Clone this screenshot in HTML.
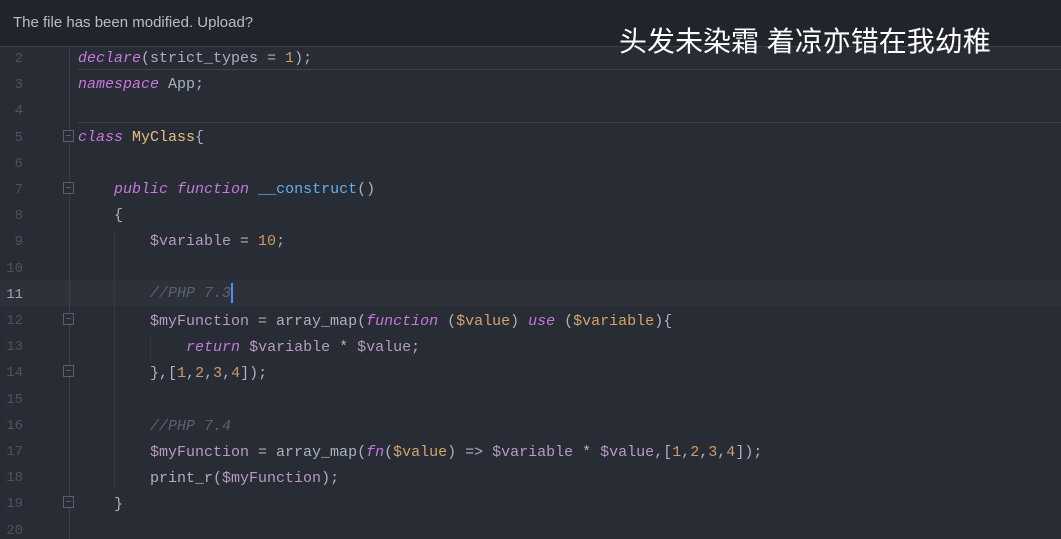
<!DOCTYPE html>
<html><head><meta charset="utf-8"><style>
*{margin:0;padding:0;box-sizing:border-box}
body{width:1061px;height:539px;overflow:hidden;background:#282c34;position:relative;font-family:"Liberation Mono",monospace;font-size:15px}
.top{position:absolute;left:0;top:0;width:1061px;height:47px;background:#21252b;border-bottom:1px solid #3a3f4a;color:#b8bec9;font-family:"Liberation Sans",sans-serif;font-size:15px;padding:14px 0 0 13px}
.cn{position:absolute;left:619px;top:20px;color:#fff;font-family:"Liberation Sans","Noto Sans CJK SC",sans-serif;font-size:28px}
.ln{position:absolute;left:0;width:23px;text-align:right;color:#4b5263;font-size:14px}
.code{position:absolute;left:78px;white-space:pre;color:#abb2bf;height:26px;line-height:26px}
.k{color:#c678dd;font-style:italic}
.c{color:#e5c07b}.n{color:#d19a66}.v{color:#b79bc4}.o{color:#d4a56a}.f{color:#61afef}.cm{color:#5c6370;font-style:italic}
.vl{position:absolute;width:1px;background:#3b404a}
.hl{position:absolute;left:0;top:280px;width:1061px;height:26px;background:#2c313a}
.fold{position:absolute;left:63px;width:11px;height:12px;border:1px solid #5a606b;background:#282c34}
.fold:after{content:"";position:absolute;left:2px;top:4px;width:5px;height:1px;background:#5a606b}
</style></head><body>
<div class="hl"></div>
<div class="vl" style="left:69px;top:47px;height:492px"></div>
<div class="vl" style="left:114px;top:230px;height:260px;background:#333842"></div>
<div class="vl" style="left:150px;top:334px;height:26px;background:#333842"></div>
<div style="position:absolute;left:78px;top:69px;width:983px;height:1px;background:#3b404a"></div>
<div style="position:absolute;left:78px;top:122px;width:983px;height:1px;background:#3b404a"></div>
<div class="top">The file has been modified. Upload?</div>
<div class="cn">头发未染霜 着凉亦错在我幼稚</div>

<div class="ln" style="top:51px">2</div><div class="ln" style="top:77px">3</div><div class="ln" style="top:103px">4</div><div class="ln" style="top:130px">5</div><div class="ln" style="top:156px">6</div><div class="ln" style="top:182px">7</div><div class="ln" style="top:208px">8</div><div class="ln" style="top:234px">9</div><div class="ln" style="top:261px">10</div><div class="ln" style="top:287px;color:#9da5b4">11</div><div class="ln" style="top:313px">12</div><div class="ln" style="top:339px">13</div><div class="ln" style="top:365px">14</div><div class="ln" style="top:392px">15</div><div class="ln" style="top:418px">16</div><div class="ln" style="top:444px">17</div><div class="ln" style="top:470px">18</div><div class="ln" style="top:496px">19</div><div class="ln" style="top:523px">20</div>

<div class="fold" style="top:130px"></div><div class="fold" style="top:182px"></div><div class="fold" style="top:313px"></div><div class="fold" style="top:365px"></div><div class="fold" style="top:496px"></div>

<div class="code" style="top:46px"><span class="k">declare</span>(strict_types = <span class="n">1</span>);</div>
<div class="code" style="top:72px"><span class="k">namespace</span> App;</div>
<div class="code" style="top:125px"><span class="k">class</span> <span class="c">MyClass</span>{</div>
<div class="code" style="top:177px">    <span class="k">public</span> <span class="k">function</span> <span class="f">__construct</span>()</div>
<div class="code" style="top:203px">    {</div>
<div class="code" style="top:229px">        <span class="v">$variable</span> = <span class="n">10</span>;</div>
<div class="code" style="top:281px">        <span class="cm">//PHP 7.3</span><span style="display:inline-block;width:2px;height:20px;background:#528bff;vertical-align:middle"></span></div>
<div class="code" style="top:309px">        <span class="v">$myFunction</span> = array_map(<span class="k">function</span> (<span class="o">$value</span>) <span class="k">use</span> (<span class="o">$variable</span>){</div>
<div class="code" style="top:335px">            <span class="k">return</span> <span class="v">$variable</span> * <span class="v">$value</span>;</div>
<div class="code" style="top:361px">        },[<span class="n">1</span>,<span class="n">2</span>,<span class="n">3</span>,<span class="n">4</span>]);</div>
<div class="code" style="top:414px">        <span class="cm">//PHP 7.4</span></div>
<div class="code" style="top:440px">        <span class="v">$myFunction</span> = array_map(<span class="k">fn</span>(<span class="o">$value</span>) =&gt; <span class="v">$variable</span> * <span class="v">$value</span>,[<span class="n">1</span>,<span class="n">2</span>,<span class="n">3</span>,<span class="n">4</span>]);</div>
<div class="code" style="top:466px">        print_r(<span class="v">$myFunction</span>);</div>
<div class="code" style="top:492px">    }</div>
</body></html>
